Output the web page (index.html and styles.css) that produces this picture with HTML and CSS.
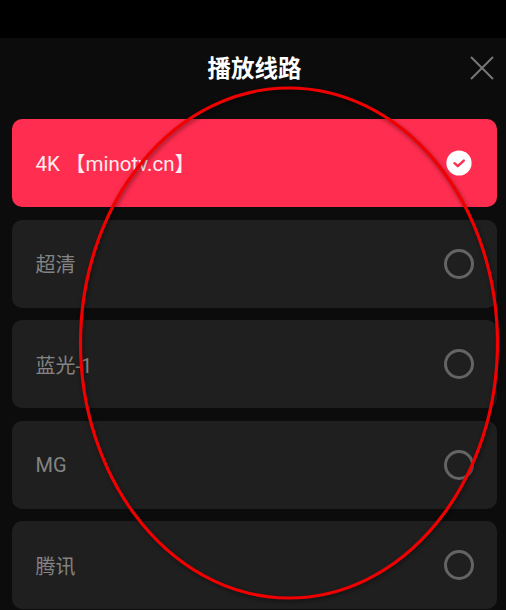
FILE: index.html
```html
<!DOCTYPE html>
<html>
<head>
    <title>播放线路</title>
    <meta name="viewport" content="width=device-width, initial-scale=1.0">
    <link rel="stylesheet" href="styles.css">
</head>
<body>
    <div class="top-bar"></div>

    <div class="sheet">
        <div class="sheet-head">
            <h2>播放线路</h2>
            <svg class="close" viewBox="0 0 24 24" width="24" height="24">
                <path d="M1 1L23 23M23 1L1 23" />
            </svg>
        </div>

        <div class="line-list">
            <div class="line-item active">
                <span>4K 【minotv.cn】</span>
                <svg class="check" viewBox="0 0 26 26" width="26" height="26">
                    <circle cx="13" cy="13" r="12.6" fill="#fff" />
                    <path d="M8.5 13.2L11.8 16.2L17.8 10.6" />
                </svg>
            </div>
            <div class="line-item">
                <span>超清</span>
                <i class="radio"></i>
            </div>
            <div class="line-item">
                <span>蓝光-1</span>
                <i class="radio"></i>
            </div>
            <div class="line-item">
                <span>MG</span>
                <i class="radio"></i>
            </div>
            <div class="line-item">
                <span>腾讯</span>
                <i class="radio"></i>
            </div>
        </div>
    </div>

    <!-- 红色圈注 -->
    <svg class="mark" viewBox="0 0 506 610" width="506" height="610">
        <ellipse cx="289" cy="343" rx="208.5" ry="255" />
    </svg>
</body>
</html>
```

FILE: styles.css
```css
html, body {
    height: 100%;
}
body {
    margin: 0;
    background: #000;
    font-family: Roboto, "Noto Sans CJK SC", sans-serif;
    overflow: hidden;
    position: relative;
}
.top-bar {
    height: 38px;
}

/* 弹层 */
.sheet {
    height: 572px;
    background: #0c0c0c;
    padding: 0 9px 0 12px;
    box-sizing: border-box;
}
.sheet-head {
    height: 81px;
    display: flex;
    align-items: center;
    justify-content: center;
    position: relative;
    padding-bottom: 23px;
    box-sizing: border-box;
}
.sheet-head h2 {
    margin: 0;
    color: #fff;
    font-size: 23.5px;
    font-weight: 700;
}
.close {
    position: absolute;
    right: 3px;
    top: 18px;
}
.close path {
    fill: none;
    stroke: #777;
    stroke-width: 2;
}

/* 线路列表 */
.line-list {
    display: flex;
    flex-direction: column;
    gap: 12.6px;
}
.line-item {
    height: 88px;
    flex: none;
    display: flex;
    align-items: center;
    justify-content: space-between;
    padding: 0 23px 0 24px;
    background: #1f1f1f;
    border-radius: 10px;
    color: #838383;
    font-size: 20px;
}
.line-item span {
    margin-left: -0.5px;
}
.line-item.active {
    background: #ff2d4f;
    color: #fdeef0;
    font-size: 20.5px;
    padding-right: 25px;
}
.line-item.active span {
    padding-bottom: 3px;
}
.check path {
    fill: none;
    stroke: #ff2d4f;
    stroke-width: 2.4;
    stroke-linecap: round;
    stroke-linejoin: round;
}
.radio {
    width: 30px;
    height: 30px;
    border: 3px solid #646464;
    border-radius: 50%;
    box-sizing: border-box;
}

/* 圈注 */
.mark {
    position: absolute;
    left: 0;
    top: 0;
    pointer-events: none;
}
.mark ellipse {
    fill: none;
    stroke: #f00000;
    stroke-width: 3.2;
    filter: drop-shadow(1px 2px 2px rgba(0, 0, 0, 0.45));
}
```
